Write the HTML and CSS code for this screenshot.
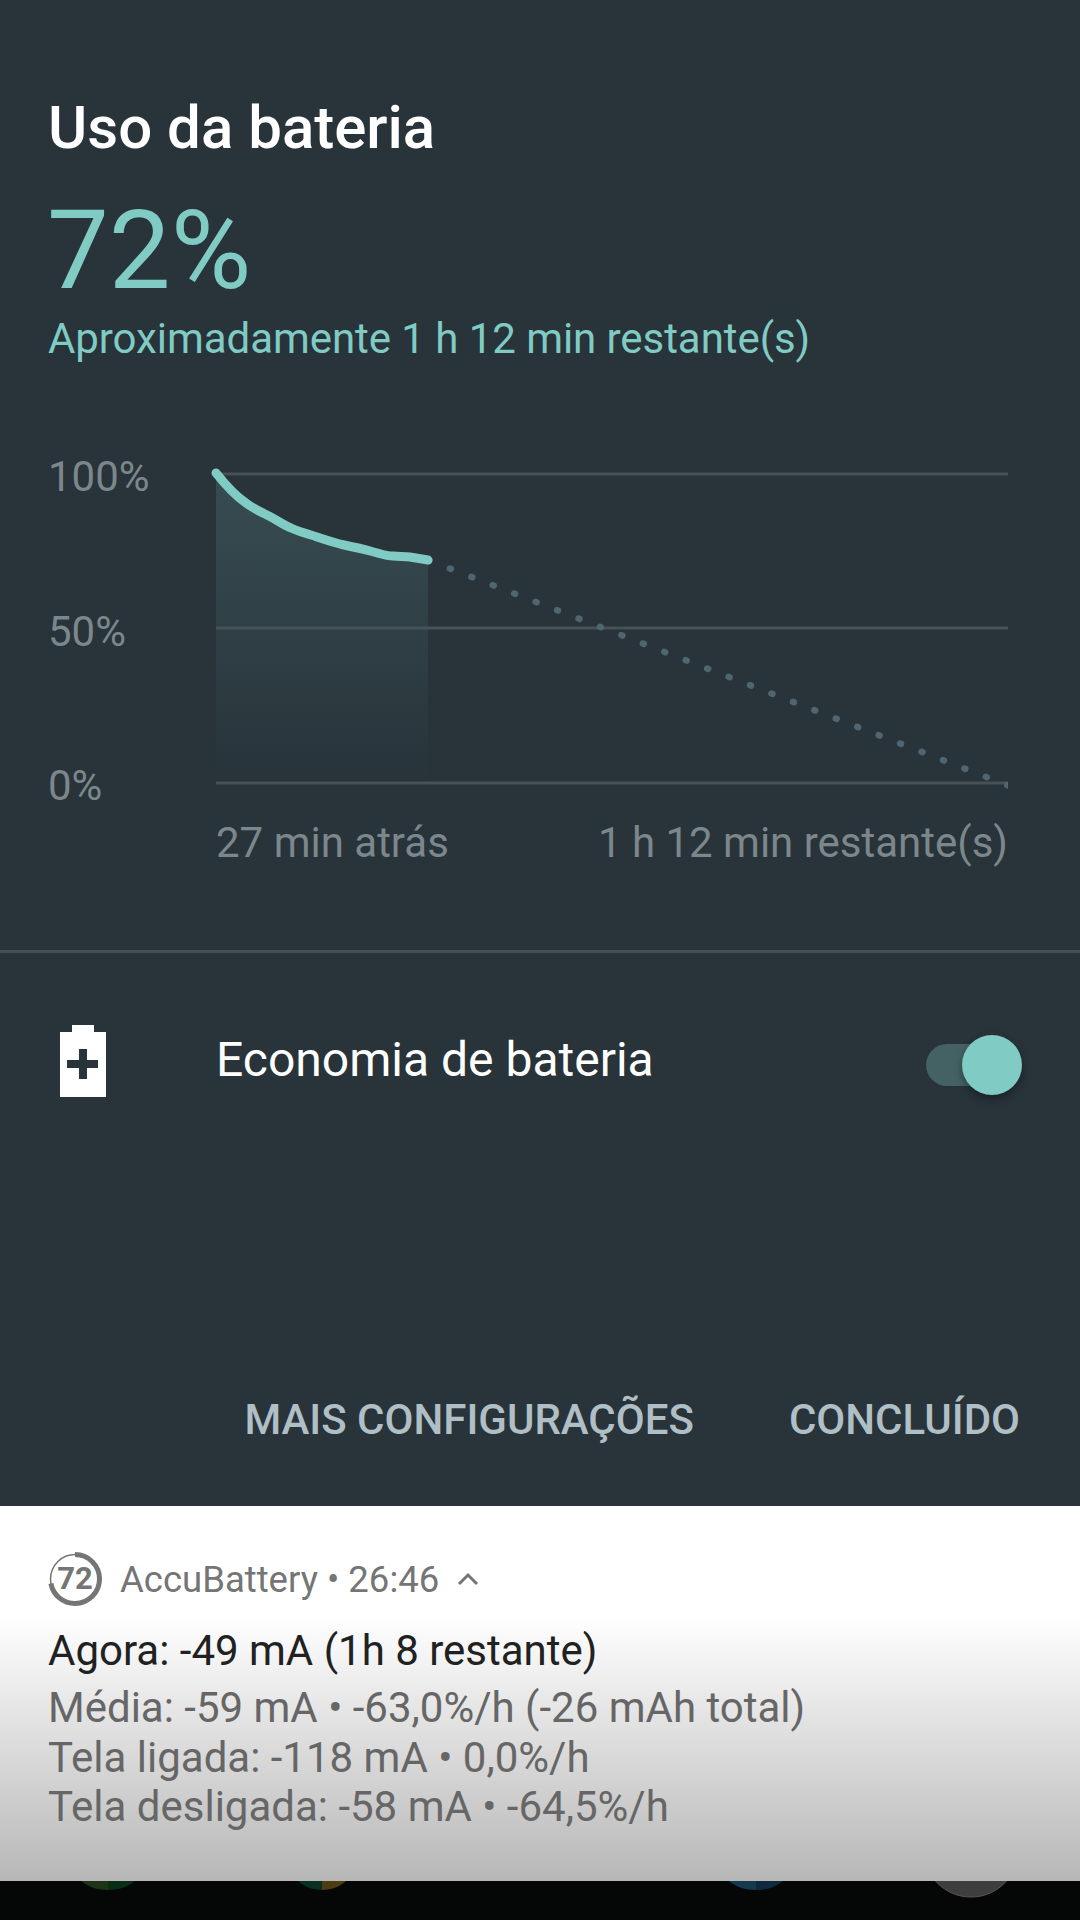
FILE: index.html
```html
<!DOCTYPE html>
<html lang="pt-BR">
<head>
    <meta charset="UTF-8">
    <meta name="viewport" content="width=device-width, initial-scale=1.0">
    <title>Uso da bateria</title>
    <link rel="stylesheet" href="styles.css">
</head>
<body>
    <div class="panel">
        <h1 class="title">Uso da bateria</h1>
        <div class="level">72%</div>
        <div class="estimate">Aproximadamente 1 h 12 min restante(s)</div>

        <div class="chart">
            <div class="y-labels">
                <span>100%</span>
                <span>50%</span>
                <span>0%</span>
            </div>
            <div class="plot">
                <svg class="plot-svg" width="792" height="320" viewBox="216 470 792 320">
                    <defs>
                        <linearGradient id="fade" x1="0" y1="0" x2="0" y2="1">
                            <stop offset="0" stop-color="#80cbc4" stop-opacity="0.17"/>
                            <stop offset="1" stop-color="#80cbc4" stop-opacity="0"/>
                        </linearGradient>
                        <clipPath id="plot-clip">
                            <rect x="216" y="470" width="792" height="320"/>
                        </clipPath>
                    </defs>
                    <path d="M216 473C224 483 234 495 246 503C254 509 261 512 269 516C277 520 283 525 291 528C300 532 308 534 317 537C326 540 335 543 344 545C354 547 363 549 372 551.500C380 553.500 386 556 393 556C400 556.500 405 556.500 410 557C416 558 422 559 428 560L428 783L216 783Z" fill="url(#fade)"/>
                    <path class="grid-line" d="M216 474H1008M216 628H1008M216 783H1008"/>
                    <path class="projection" clip-path="url(#plot-clip)" d="M428 560L1012 787"/>
                    <path class="history" d="M216 473C224 483 234 495 246 503C254 509 261 512 269 516C277 520 283 525 291 528C300 532 308 534 317 537C326 540 335 543 344 545C354 547 363 549 372 551.500C380 553.500 386 556 393 556C400 556.500 405 556.500 410 557C416 558 422 559 428 560"/>
                </svg>
                <div class="x-labels">
                    <span>27 min atrás</span>
                    <span>1 h 12 min restante(s)</span>
                </div>
            </div>
        </div>

        <div class="saver">
            <svg class="saver-icon" width="46" height="72" viewBox="0 0 46 72">
                <path fill="#fff" fill-rule="evenodd" d="M12 0H34V7H46V72H0V7H12ZM19 24V35H7V43H19V54H27V43H38V35H27V24Z"/>
            </svg>
            <span class="saver-label">Economia de bateria</span>
            <div class="switch">
                <div class="switch-thumb"></div>
            </div>
        </div>

        <div class="actions">
            <span>MAIS CONFIGURAÇÕES</span>
            <span>CONCLUÍDO</span>
        </div>
    </div>

    <div class="notification">
        <div class="notif-head">
            <div class="notif-badge">
                <svg width="54" height="54" viewBox="0 0 54 54">
                    <circle class="ring-rest" cx="27" cy="27" r="24.500"/>
                    <circle class="ring-used" cx="27" cy="27" r="24.500" pathLength="100" stroke-dasharray="72 100" transform="rotate(-90 27 27)"/>
                </svg>
                <span>72</span>
            </div>
            <span class="notif-app">AccuBattery • 26:46</span>
            <svg class="notif-caret" width="22" height="14" viewBox="0 0 22 14">
                <path d="M2 12L11 3L20 12" fill="none" stroke="#757575" stroke-width="3"/>
            </svg>
        </div>
        <div class="notif-main">Agora: -49 mA (1h 8 restante)</div>
        <div class="notif-line">Média: -59 mA • -63,0%/h (-26 mAh total)</div>
        <div class="notif-line">Tela ligada: -118 mA • 0,0%/h</div>
        <div class="notif-line">Tela desligada: -58 mA • -64,5%/h</div>
    </div>

    <div class="wallpaper">
        <svg width="1080" height="39" viewBox="0 1881 1080 39">
            <path fill="#1f3319" d="M108 1890C88 1890 78 1880 73 1870H108Z"/>
            <path fill="#0a2d16" d="M108 1890C128 1890 138 1880 143 1870H108Z"/>
            <path fill="#0a3020" d="M322 1890C305 1890 295 1880 290 1870H322Z"/>
            <path fill="#4d3d14" d="M322 1890C339 1890 349 1880 354 1870H322Z"/>
            <path fill="#163a4d" d="M756 1890C736 1890 726 1880 720 1870H756Z"/>
            <path fill="#0e2a3c" d="M756 1890C776 1890 786 1880 792 1870H756Z"/>
            <path fill="#3e3e3e" stroke="#555" stroke-width="1" d="M971 1897C948 1897 934 1882 928 1870H1014C1008 1882 994 1897 971 1897Z"/>
        </svg>
    </div>
</body>
</html>
```

FILE: styles.css
```css
* {
    box-sizing: border-box;
}

body {
    margin: 0;
    width: 1080px;
    height: 1920px;
    overflow: hidden;
    background-color: #000;
    font-family: Roboto, sans-serif;
    display: flex;
    flex-direction: column;
}

/* dialog */
.panel {
    height: 1506px;
    padding-top: 93px;
    background-color: #28333a;
    display: flex;
    flex-direction: column;
}

.title {
    margin: 0 0 0 48px;
    font-size: 60px;
    line-height: 70px;
    font-weight: 500;
    color: #fff;
}

.level {
    margin: 29px 0 0 47px;
    font-size: 110px;
    line-height: 118px;
    font-weight: 400;
    color: #80cbc4;
}

.estimate {
    margin: 4px 0 0 48px;
    font-size: 42px;
    line-height: 50px;
    letter-spacing: -0.06px;
    color: #80cbc4;
}

/* chart */
.chart {
    margin-top: 106px;
    display: flex;
}

.y-labels {
    width: 216px;
    height: 357px;
    margin-top: -17px;
    padding-left: 48px;
    font-size: 42px;
    line-height: 48px;
    color: #7c878c;
    display: flex;
    flex-direction: column;
    justify-content: space-between;
}

.plot {
    width: 792px;
}

.plot-svg {
    display: block;
    overflow: visible;
}

.grid-line {
    fill: none;
    stroke: #465257;
    stroke-width: 3;
}

.projection {
    fill: none;
    stroke: #4f6670;
    stroke-width: 6.500;
    stroke-linecap: round;
    stroke-dasharray: 1 22;
    stroke-dashoffset: -0.500;
}

.history {
    fill: none;
    stroke: #80cbc4;
    stroke-width: 9;
    stroke-linecap: round;
}

.x-labels {
    margin-top: 29px;
    font-size: 42px;
    line-height: 48px;
    color: #7c878c;
    display: flex;
    justify-content: space-between;
}

/* battery saver row */
.saver {
    margin-top: 83px;
    height: 218px;
    padding: 0 70px 0 60px;
    border-top: 3px solid #434f55;
    display: flex;
    align-items: center;
}

.saver-label {
    margin: 0 0 2px 110px;
    font-size: 48px;
    color: #fff;
    flex: 1;
}

.switch {
    margin-top: 9px;
    position: relative;
    width: 84px;
    height: 42px;
    border-radius: 21px;
    background-color: #446264;
}

.switch-thumb {
    position: absolute;
    top: -9px;
    right: -12px;
    width: 60px;
    height: 60px;
    border-radius: 50%;
    background-color: #80cbc4;
    box-shadow: 0 4px 8px rgba(0, 0, 0, 0.35);
}

.actions {
    margin-top: auto;
    padding: 0 60px 61px 0;
    font-size: 42px;
    line-height: 50px;
    font-weight: 500;
    color: #b0bec5;
    display: flex;
    justify-content: flex-end;
    gap: 95px;
}

/* notification */
.notification {
    height: 375px;
    padding: 45px 0 0 48px;
    background: linear-gradient(#fff 110px, #b7b7b7 100%);
}

.notif-head {
    height: 56px;
    display: flex;
    align-items: center;
}

.notif-badge {
    position: relative;
    width: 54px;
    height: 54px;
}

.notif-badge svg {
    display: block;
}

.notif-badge span {
    position: absolute;
    inset: 0;
    font-size: 31px;
    font-weight: 700;
    line-height: 54px;
    text-align: center;
    color: #757575;
}

.ring-rest {
    fill: none;
    stroke: #757575;
    stroke-width: 1.500;
}

.ring-used {
    fill: none;
    stroke: #757575;
    stroke-width: 5;
}

.notif-app {
    margin-left: 18px;
    font-size: 36.500px;
    color: #757575;
}

.notif-caret {
    margin-left: 18px;
}

.notif-main {
    margin: 15px 0 3px;
    font-size: 42px;
    line-height: 58px;
    color: #212121;
}

.notif-line {
    font-size: 42px;
    line-height: 49.500px;
    color: #666;
}

.wallpaper {
    height: 39px;
    background-color: #050606;
    overflow: hidden;
}

.wallpaper svg {
    display: block;
}
```
